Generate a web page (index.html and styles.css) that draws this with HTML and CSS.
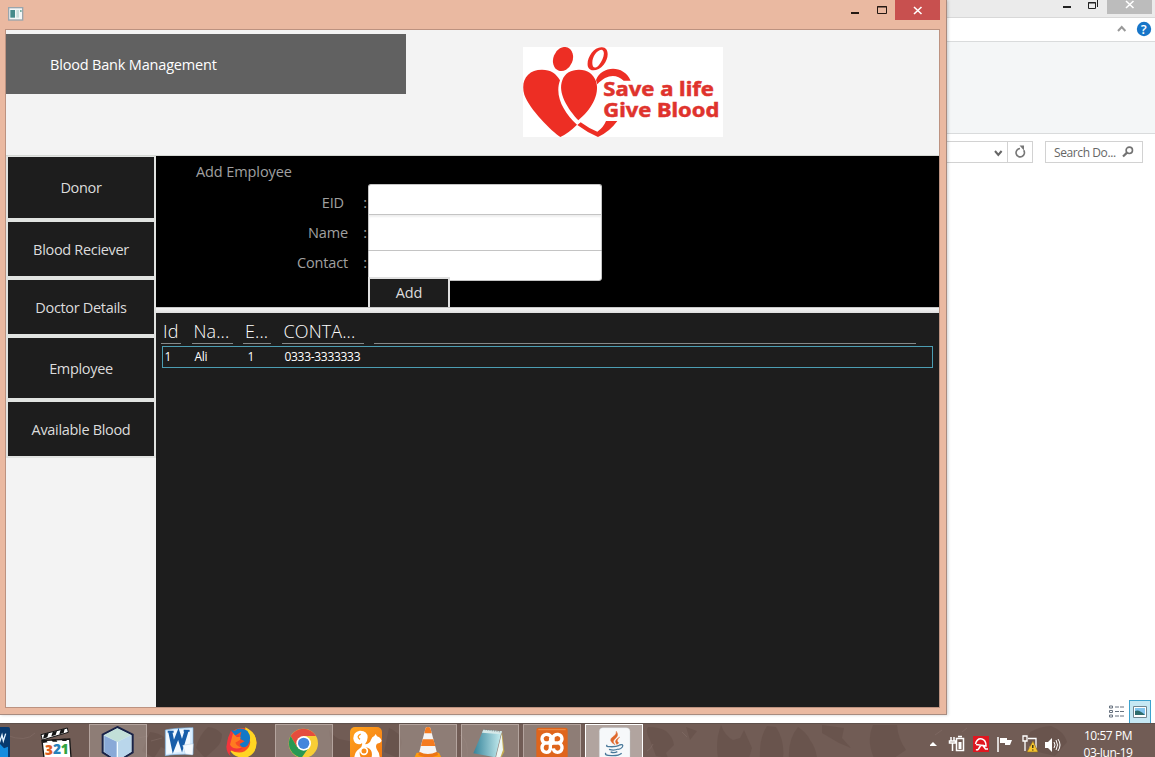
FILE: index.html
```html
<!DOCTYPE html>
<html lang="en">
<head>
<meta charset="utf-8">
<title>Blood Bank Management</title>
<link rel="stylesheet" href="styles.css">
</head>
<body>
<main class="desktop">
  <section class="app">
    <header class="titlebar">
      <svg class="app-icon" viewBox="24 21 48 42"><rect x="24" y="21" width="46" height="41" fill="#9aa5ac"/><rect x="28" y="25" width="38" height="33" fill="#f3f7f7"/><rect x="31" y="30" width="14" height="23" fill="#458b8b"/><rect x="49" y="30" width="8" height="23" fill="#c9dfdd"/><rect x="60" y="30" width="5" height="6" fill="#7bb0a6"/></svg>
      <svg class="win-controls" viewBox="0 0 97 20"><rect x="52" width="45" height="20" fill="#c8504f"/><path d="M8 13h8" stroke="#241812" stroke-width="2"/><path d="M34.500 6.500h9v7h-9z M34 7h10" fill="none" stroke="#241812"/><path d="M71 7l7.500 7M78.500 7l-7.500 7" stroke="#fff" stroke-width="1.600"/></svg>
    </header>
    <div class="client">
      <div class="masthead">
        <div class="banner"><h1>Blood Bank Management</h1></div>
        <svg class="logo" viewBox="39 33 600 270">
          <rect x="39" y="33" width="600" height="270" fill="#fff"/>
          <g fill="#ed2e24">
            <ellipse cx="159" cy="69" rx="29" ry="37" transform="rotate(22 159 69)"/>
            <path fill-rule="evenodd" d="M274 34C298 32 298 66 281 86C266 104 242 110 234 93C227 71 249 34 274 34Z M276 41C260 41 246 64 247 82C247 97 257 99 267 87C279 72 288 48 276 41Z"/>
            <path d="M151 303C126 286 58 220 43 176C31 134 52 101 96 101C122 101 139 113 150 133C133 180 161 229 201 266Q176 291 151 303Z"/>
            <path d="M205 253C174 220 142 171 157 133C164 111 184 101 207 101C233 101 250 114 258 136C271 177 241 224 205 253Z"/>
            <path d="M258 132C273 90 340 83 362 134L341 134C319 113 289 115 262 145Z"/>
            <path d="M212 259Q236 277 262 287Q280 275 288 255L322 255Q299 287 264 303Q231 289 202 267Z"/>
          </g>
          <g class="logo-text"><text x="280" y="181" textLength="332" lengthAdjust="spacingAndGlyphs">Save a life</text><text x="280" y="242" textLength="348" lengthAdjust="spacingAndGlyphs">Give Blood</text></g>
        </svg>
      </div>
      <div class="body">
        <nav class="sidebar">
          <button class="nav-item tall">Donor</button>
          <button class="nav-item">Blood Reciever</button>
          <button class="nav-item">Doctor Details</button>
          <button class="nav-item mid">Employee</button>
          <button class="nav-item">Available Blood</button>
        </nav>
        <div class="content">
          <form class="employee-form">
            <h2>Add Employee</h2>
            <div class="form-row">
              <div class="labels">
                <label class="eid">EID</label><span>:</span>
                <label>Name</label><span>:</span>
                <label>Contact</label><span>:</span>
              </div>
              <div class="fields">
                <input class="field" type="text"><input class="field field-name" type="text"><input class="field" type="text">
                <button class="add" type="button">Add</button>
              </div>
            </div>
          </form>
          <div class="divider"></div>
          <div class="table">
            <div class="columns thead"><span>Id</span><span>Na...</span><span>E...</span><span>CONTA...</span><span></span></div>
            <div class="columns trow"><span>1</span><span>Ali</span><span>1</span><span>0333-3333333</span></div>
          </div>
        </div>
      </div>
    </div>
  </section>
  <section class="explorer">
    <div class="ex-title"><svg viewBox="0 0 94 17"><rect x="46" width="45" height="14" fill="#bcbcbc"/><path d="M2 7h8" stroke="#222" stroke-width="2"/><path d="M27.500 2.500h7v6h-7zM27 3h8M36.500 0v7" fill="none" stroke="#222"/><path d="M65 1l7.500 7M72.500 1l-7.500 7" stroke="#fff" stroke-width="1.600"/></svg></div>
    <div class="ex-tabs"><svg viewBox="0 0 40 23"><path d="M1 13l3.700-4 3.700 4" fill="none" stroke="#999" stroke-width="2"/><circle cx="27" cy="11" r="7.200" fill="#1775c8"/><text x="23.700" y="16" class="help">?</text></svg></div>
    <div class="ribbon"></div>
    <div class="ex-bar">
      <div class="address"><svg viewBox="0 0 85 20"><path d="M60.500 0v21" stroke="#d2d2d2"/><path d="M48 9l3.300 4L54.600 9" fill="none" stroke="#666" stroke-width="2"/><path d="M76.700 8.300A4.200 4.200 0 1 1 73 6.500" fill="none" stroke="#777" stroke-width="1.600"/><path d="M72.500 3.500h4.500v5z" fill="#777"/></svg></div>
      <div class="search"><span>Search Do...</span><svg viewBox="0 0 12 12"><circle cx="7.300" cy="4.300" r="3.200" fill="none" stroke="#727272" stroke-width="1.600"/><path d="M5 6.600L1 10.500" stroke="#727272" stroke-width="2.200"/></svg></div>
    </div>
    <div class="views">
      <svg viewBox="0 0 16 13"><g fill="none" stroke="#66717e"><path d="M.5 1h3v2h-3zM.5 5.500h3v2h-3zM.5 10h3v2h-3z"/><path d="M6 2h9M6 6.500h9M6 11h9" stroke-dasharray="4 1"/></g></svg>
      <div class="view-active"><svg viewBox="0 0 14 12"><path d="M.5.500h13v11H.5z" fill="#fff" stroke="#718690"/><path d="M2 2h10v7H2z" fill="#83c5ef"/><path d="M2 5q4-2 10 4H2z" fill="#2f6c6b"/></svg></div>
    </div>
  </section>
</main>
<footer class="taskbar">
  <svg class="texture" viewBox="0 0 1155 34" preserveAspectRatio="none"><g fill="#5f4b43" opacity=".42"><path d="M150 8q9 1 14 5l4 9q4 5 5 7l-12-6-7 11-12-7zM208 3q9 1 14 7 0 9-6 14l-11 10-9-10q3-13 12-21zM329 6q4 6 10 9l15 3 4 16h-25zM389 4q11 4 13 14l-4 16-14-6zM648 3q11 0 18 4 7 6 8 14l-8 8 2 5-12-2-6-16q-5-8-2-13zM686 3l11 4-7 9zM721 1q4 11 12 15l7-2 4-8 8 18-3 10h-31q-3-17 3-33zM767 2l9 1q9 14 7 31h-23q-1-20 7-32zM798 3q9 6 12 13 6 8 7 18h-28q-1-19 9-31zM822 1l22 3-2 10 9 10-12-5-17-10zM873 1h24q1 14 9 25l-12 8h-20q-8-18-1-33zM1030 8q11-6 21-6 13 5 16 16l-12 14-21-5q-9-9-4-19z"/></g><g fill="none" stroke="#86706a" opacity=".5"><path d="M6 11q20 8 29-2M138 14l10-2M151 17l11-3M460 11q9 5 7 22M653 20q-2 5-6 7M682 8l5 5M935 11l7-5M962 8l5-4"/></g></svg>
  <div class="slot first"><svg viewBox="0 84 75 102"><path d="M0 96h25q5 0 5 5v85H0" fill="#07396f"/><path d="M0 147l12 13 12-5v31H0" fill="#138ce0"/><path d="M-5 116l5 22 6-18 4 18 7-22" fill="none" stroke="#e7f4ff" stroke-width="4"/></svg></div>
  <div class="slot"><svg viewBox="81 84 174 102"><path d="M126 137l83-5 4 56h-81z" fill="#fff" stroke="#151515" stroke-width="4"/><path d="M123 119l79-20 3 13-78 23z" fill="#fff" stroke="#151515" stroke-width="3"/><path d="M133 117l13-4-4 14-13 4zM158 111l13-4-4 13-13 4zM182 104l12-3-3 13-13 4zM126 135l12 1 5 6-15 2zM154 134l14-1 4 7h-14zM182 132l14-1 5 7h-13z" fill="#151515"/><g class="reel"><text x="135" y="179" fill="#e05d1c" textLength="24" lengthAdjust="spacingAndGlyphs">3</text><text x="159" y="178" fill="#2680bb" textLength="24" lengthAdjust="spacingAndGlyphs">2</text><text x="182" y="177" fill="#32a441" textLength="24" lengthAdjust="spacingAndGlyphs">1</text></g></svg></div>
  <div class="slot open"><svg viewBox="267 84 174 102"><path d="M352 96l46 23v53l-46 28-44-28v-53z" fill="#d2e8ef" stroke="#192348" stroke-width="6"/><path d="M313 122l39 19v56l-39-26z" fill="#89a9d7"/><path d="M352 141l41-20v50l-41 26z" fill="#b9d6eb"/><path d="M313 120l39-20 41 20-41 20z" fill="#c2dfd8"/><path d="M352 141v50" stroke="#f4fcff" stroke-width="4"/></svg></div>
  <div class="slot"><svg viewBox="453 84 174 102"><path d="M496 105q27-6 83-7v80q-52-2-83 4z" fill="#d9edff" stroke="#7fb7e6" stroke-width="2"/><path d="M499 109l71-8v64l-71 12z" fill="#fff" opacity=".65"/><path d="M511 111l9 44 15-38 11 35 14-46" fill="none" stroke="#175da9" stroke-width="12"/><path d="M503 110h18M551 107h18" stroke="#175da9" stroke-width="6"/><path d="M548 151l32-5-2 34-22-3z" fill="#f6fbff" stroke="#8eb3d6"/></svg></div>
  <div class="slot"><svg viewBox="-6 84 174 102"><circle cx="81" cy="142" r="43" fill="#f84d23"/><path d="M91 97q34 16 34 47-2 35-32 44-35 2-49-23 40 19 58-10 11-21-11-36z" fill="#ffd522"/><path d="M48 106l12 16 19-12-5 21 15 8-15 8q7 17 23 5 17-22 0-45-26-13-37 0z" fill="#1478c8"/><path d="M39 130l9-24 10 17 14-2 3 14-16 9q7 17 24 14-12 16-34 7-13 15 8 24-22-9-23-34z" fill="#f2353c"/><path d="M54 115l11 11 12-1-2 10-14 8q6 13 20 14-24 10-36-8z" fill="#ff7b20"/></svg></div>
  <div class="slot open"><svg viewBox="180 84 174 102"><circle cx="265" cy="145" r="44" fill="#f7ce36"/><path d="M227 123A44 44 0 0 1 303 123H265L246 156Z" fill="#e44c3e"/><path d="M227 123A44 44 0 0 0 260 188L282 157 246 156Z" fill="#289853"/><circle cx="266" cy="145" r="22" fill="#fff"/><circle cx="266" cy="145" r="17" fill="#4285dc"/></svg></div>
  <div class="slot"><svg viewBox="366 84 174 102"><defs><linearGradient id="uc" x2="1" y2="1"><stop stop-color="#ffa31d"/><stop offset="1" stop-color="#f47912"/></linearGradient></defs><rect x="405" y="96" width="96" height="101" rx="15" fill="url(#uc)"/><path d="M418 186q2-16 14-24 12-8 9-18-2 4-9 4-15-2-17-17-1-20 19-24 23-1 24 20 0 11-8 21 14-1 18-14 3-9 10-11l4-6 4 7q12 4 14 14-3 7-14 8-6 6 0 18 7 8 8 22H470q4-22-12-28-17-5-23 11-3 9 3 19z" fill="#fff"/><circle cx="447" cy="168" r="10" fill="none" stroke="#fff" stroke-width="5"/><path d="M437 117q-14 8-2 16" fill="none" stroke="#ff9d1d" stroke-width="4"/></svg></div>
  <div class="slot open"><svg viewBox="552 84 174 102"><path d="M605 173h67l10 20h-86z" fill="#ff9b0c"/><path d="M632 98q7-4 14 0l20 76q-26 14-54 0z" fill="#f5f5f5"/><path d="M632 98q7-4 14 0l4 17h-22zM623 133h32l6 20h-43z" fill="#f47b20"/><path d="M613 170q25 14 53 0l3 10q-27 14-59 0z" fill="#ed7616"/></svg></div>
  <div class="slot open"><svg viewBox="93 84 174 102"><defs><linearGradient id="note"><stop stop-color="#35839a"/><stop offset="1" stop-color="#c8eef0"/></linearGradient></defs><path d="M216 110l7 60-9 17-10-7z" fill="#c7ad50"/><path d="M160 104l55 5-19 78-66-12z" fill="url(#note)"/><path d="M160 104l56 5-3 9-57-5z" fill="#d5e8e8"/><path d="M215 116l-17 71h13l8-22z" fill="#eff7f2"/><path d="M166 106v-5m7 6v-5m7 6v-5m7 6v-5m7 6v-5m7 6v-5m7 6v-5" stroke="#777e7e" stroke-width="2"/></svg></div>
  <div class="slot open"><svg viewBox="279 84 174 102"><rect x="319" y="98" width="94" height="98" rx="7" fill="#df651c"/><path d="M325 104h82" stroke="#ee914e" stroke-width="3"/><path d="M365 129Q361 117 349 118Q336 120 336 132Q337 142 346 144Q335 148 336 160Q338 172 349 172Q360 172 361 160V151Q362 144 371 144H383M367 129Q372 117 384 118Q396 120 396 132Q395 142 385 144Q397 147 396 160Q394 172 383 172Q371 171 370 160M362 128V135Q361 144 352 144H346M369 128V136Q370 144 377 144" fill="none" stroke="#fff" stroke-width="10" stroke-linejoin="round"/></svg></div>
  <div class="slot open active"><svg viewBox="465 84 174 102"><rect x="508" y="98" width="92" height="98" rx="11" fill="#f6f8fa" stroke="#c5cbd0"/><path d="M555 149q-22-12-7-23 14-9 11-17 9 13-4 22-10 8 0 18M560 148q-7-9 0-15l9-7q-13 12-3 17-1 4-6 5" fill="#df672b" stroke="#df672b" stroke-width="1.500"/><g fill="none" stroke="#48789a" stroke-width="4"><path d="M532 150q-7 5 8 5 17 1 28-4M537 163q15 5 28-1M542 171q11 4 20-1M568 150q14-4 9 6-4 6-12 7M528 174q-7 7 16 8 22 1 31-7"/></g></svg></div>
  <svg class="tray" viewBox="0 0 140 34"><path d="M-1 23l4-4 4 4z" fill="#fff"/><g fill="none" stroke="#fff" stroke-width="1.500"><path d="M26.500 15.500h7v12h-7zM28 13.500h4M21 14v4m3-4v4M19.500 18h6v2h-6zM22.500 20v8"/></g><path d="M28.500 19h3v7h-3z" fill="#fff"/><rect x="43" y="13" width="16" height="16" fill="#df1721"/><path d="M45.500 21Q47 15 52 16Q56 17 56 23L46 21.500M51 22l-2.500 4q-1 1.500-2.500.5M52.500 22l3 4H58" fill="none" stroke="#fff" stroke-width="1.500"/><path d="M68 14v15" stroke="#fff" stroke-width="1.500"/><path d="M70 15h7v2h5l-2 5h-5v-2h-5z" fill="#fff"/><g fill="none" stroke="#fff" stroke-width="1.300"><path d="M98 15.500h8v9h-7M93 13v5h4v-5zM95 18v10M98 28h4"/></g><path d="M103 18l5 11H97z" fill="#f8c52d" stroke="#8a6c25" stroke-width=".6"/><path d="M102.800 22v3m0 1.500v1" stroke="#221" stroke-width="1.300"/><path d="M115 19h3l4-4v14l-4-4h-3z" fill="#fff"/><path d="M124 19q2 3 0 6m2-8q3 5 0 10m2-11q4 6 0 12" fill="none" stroke="#fff"/></svg>
  <div class="clock"><span>10:57 PM</span><span>03-Jun-19</span></div>
</footer>
</body>
</html>
```
FILE: styles.css
```css
* { box-sizing: border-box; }
body {
  margin: 0;
  width: 1155px;
  height: 757px;
  overflow: hidden;
  background: #fff;
  font-family: "Open Sans", "Noto Sans", sans-serif;
}
svg { display: block; }
button, input { font-family: inherit; }
h1, h2 { margin: 0; font-weight: 400; }

.desktop { display: flex; height: 723px; }

/* Application window */
.app {
  width: 947px;
  height: 715px;
  padding: 0 6px 6px 5px;
  background: #eab9a1;
  border: solid #a78b80;
  border-width: 0 1px 1px 0;
  box-shadow: 1px 0 3px #0003;
  position: relative;
}
.titlebar { display: flex; justify-content: space-between; height: 29px; }
.app-icon { width: 16px; height: 14px; margin: 7px 0 0 3px; }
.win-controls { width: 97px; height: 20px; }
.client { width: 935px; height: 679px; border: 1px solid #bc9280; background: #f3f3f3; }
.masthead { display: flex; height: 126px; border-bottom: 1px solid #d5d8d4; }
.banner { display: flex; align-items: center; width: 400px; height: 60px; margin-top: 4px; padding-left: 44px; background: #616161; color: #fff; }
.banner h1 { font-size: 14.5px; font-weight: 500; letter-spacing: -.18px; }
.logo { width: 200px; height: 90px; margin: 17px 0 0 117px; }
.logo-text { font: 700 56px "Noto Sans", "Open Sans", sans-serif; fill: #df332d; stroke: #df332d; stroke-width: 1.5px; }

.body { display: flex; height: 551px; }
.sidebar { display: flex; flex-direction: column; width: 150px; }
.nav-item {
  height: 58px;
  flex: none;
  border: 2px solid #e1e3e1;
  background: #1d1d1d;
  color: #dcdcdc;
  font-size: 14.5px;
  letter-spacing: -.32px;
  padding: 0;
}
.nav-item.tall { height: 64px; border-top-width: 1px; }
.nav-item.mid { height: 64px; }
.content { width: 783px; }

.employee-form { height: 151px; background: #000; color: #a0a0a0; }
.employee-form h2 { height: 28px; padding: 5px 0 0 40px; font-size: 14.5px; font-weight: 500; line-height: 21px; letter-spacing: -.1px; }
.form-row { display: flex; }
.labels { display: grid; grid-template-columns: 192px 19px; grid-auto-rows: 30px; width: 212px; padding-top: 4px; font-size: 14.5px; font-weight: 500; line-height: 29px; letter-spacing: -.15px; text-align: right; }
.labels .eid { padding-right: 4px; }
.fields { display: flex; flex-direction: column; width: 234px; }
.field { width: 234px; height: 30px; padding: 0 7px; border: 1px solid #c4c4c4; border-bottom: 0; border-radius: 3px 3px 0 0; background: #fff; }
.field-name { height: 36px; border-radius: 0; box-shadow: inset 0 2px 2px #0001; }
.field:last-of-type { height: 31px; border: 1px solid #c4c4c4; border-radius: 0 0 3px 3px; }
.add { width: 82px; height: 30px; margin-top: -4px; padding: 0 0 2px; border: 2px solid #e1e1e1; border-bottom: 0; background: #1d1d1d; color: #dcdcdc; font-size: 14.5px; letter-spacing: -.2px; z-index: 1; }
.divider { height: 6px; background: linear-gradient(#c8c8c8 0 1px, #f5f5f5 1px, #dedede); }

.table { height: 394px; padding: 6px 6px 0 5px; background: #1d1d1d; color: #fff; }
.columns { display: grid; }
.thead { grid-template-columns: 20px 41px 28px 82px 542px; column-gap: 10.5px; height: 25px; font-size: 18px; font-weight: 300; line-height: 24px; }
.thead span { padding-left: 2px; border-bottom: 1px solid #85898a; white-space: nowrap; letter-spacing: .1px; }
.trow { grid-template-columns: 30px 53px 37px 1fr; height: 22px; margin: 2px 0 0 1px; padding-left: 1.5px; border: 1px solid #4c9db2; font-size: 12px; line-height: 20px; letter-spacing: -.3px; }

/* File explorer window behind */
.explorer { display: flex; flex-direction: column; width: 208px; background: #fff; }
.ex-title { height: 18px; background: #ebebeb; border-bottom: 1px solid #d8d8d8; display: flex; justify-content: flex-end; }
.ex-title svg { width: 94px; height: 17px; }
.ex-tabs { display: flex; justify-content: flex-end; height: 24px; border-bottom: 1px solid #d9dbdc; }
.ex-tabs svg { width: 40px; height: 23px; margin-right: -2px; }
.help { font: 600 13px "Open Sans", sans-serif; fill: #fff; }
.ribbon { height: 92px; background: #f4f6f7; border-bottom: 1px solid #d9dbdc; }
.ex-bar { display: flex; gap: 12px; margin-top: 7px; height: 22px; }
.address { width: 86px; border: 1px solid #d2d2d2; border-left: 0; }
.address svg { width: 85px; height: 20px; }
.search { display: flex; align-items: center; justify-content: space-between; width: 98px; padding: 0 8px; border: 1px solid #d2d2d2; color: #666; font-size: 12px; letter-spacing: -.4px; }
.search svg { width: 12px; height: 12px; }
.views { display: flex; gap: 4px; align-items: center; justify-content: flex-end; margin-top: auto; padding-right: 4px; }
.views > svg { width: 16px; height: 13px; }
.view-active { display: grid; place-items: center; width: 22px; height: 23px; background: #c6e8f4; border: 1px solid #3da2ce; border-bottom: 0; }
.view-active svg { width: 14px; height: 12px; }

/* Taskbar */
.taskbar { position: relative; display: flex; height: 34px; overflow: hidden; background: #715c55; border-top: 1px solid #5f514c; }
.texture { position: absolute; inset: 0; width: 1155px; height: 34px; }
.slot { position: relative; flex: none; width: 58px; height: 34px; margin: 0 2px; }
.slot svg { width: 58px; height: 34px; margin-top: -1px; }
.slot.first { width: 25px; margin: 0; }
.slot.first svg { width: 25px; }
.slot.open { border: 1px solid #b4a49e; border-bottom: 0; background: #a2928c99; }
.slot.open svg { margin: -2px 0 0 -1px; }
.slot.active { border: 1px solid #fff; border-bottom: 0; background: #c2b6b1cc; }
.reel { font: 800 43px "Open Sans", sans-serif; }
.tray { position: relative; flex: none; width: 140px; height: 34px; margin: -1px 0 0 285px; }
.clock { position: relative; flex: none; display: flex; flex-direction: column; align-items: center; width: 76px; padding-top: 3px; color: #fff; font-size: 12px; line-height: 17px; letter-spacing: -.45px; }
```
